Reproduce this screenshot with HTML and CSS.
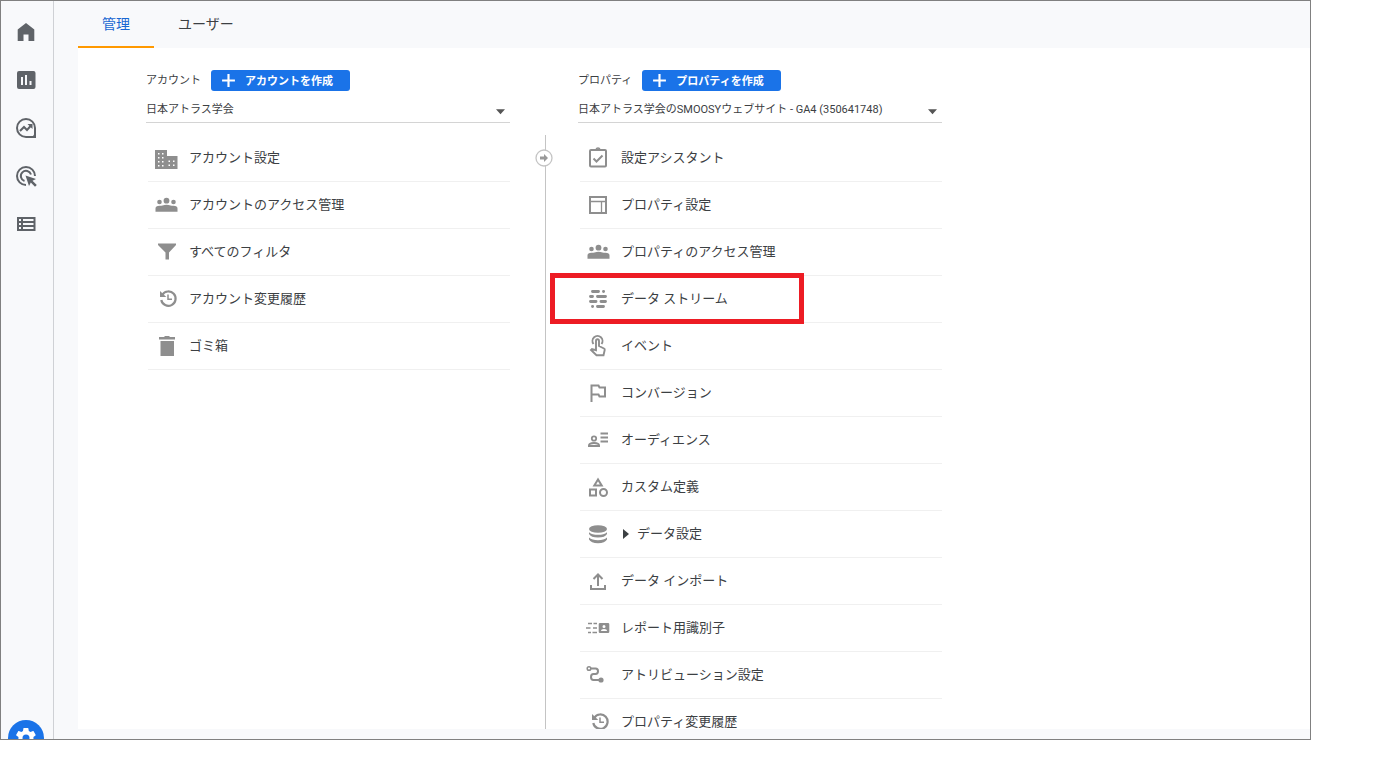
FILE: index.html
```html
<!DOCTYPE html>
<html lang="ja">
<head>
<meta charset="utf-8">
<title>管理</title>
<link rel="stylesheet" href="styles.css">
</head>
<body>
<svg class="defs" aria-hidden="true">
  <symbol id="group" viewBox="0 0 24 24"><circle cx="5.500" cy="9" r="2.300"/><circle cx="12.500" cy="7.700" r="2.900"/><circle cx="19.500" cy="9" r="2.300"/><path d="M1.500 18.700V15.500Q1.500 12.800 5.500 12.800Q7.500 12.800 8.500 12.500Q12.500 11 16.500 12.500Q17.500 12.800 19.500 12.800Q23.500 12.800 23.500 15.500V18.700Z"/></symbol>
  <symbol id="history" viewBox="0 0 24 24"><path fill="none" stroke="currentColor" stroke-width="2.200" d="M8.300 7.800A7.200 7.200 0 1 1 7.300 13"/><path d="M6 4V10H12.300Z"/><path fill="none" stroke="currentColor" stroke-width="1.500" d="M14 7.500V12.300H18"/></symbol>
</svg>
<div class="app">
  <nav class="sidebar" aria-label="メイン">
    <a href="#" class="nav-link" aria-label="ホーム"><svg viewBox="0 0 24 24"><path d="M12 3L3.700 9.500V21H9.500V14.500H14.500V21H20.300V9.500Z"/></svg></a>
    <a href="#" class="nav-link" aria-label="レポート"><svg viewBox="0 0 24 24"><path fill-rule="evenodd" d="M5 3H19.500Q21.500 3 21.500 5V19Q21.500 21 19.500 21H5Q3 21 3 19V5Q3 3 5 3ZM7 9V17H9V9ZM11 7V17H13V7ZM15.500 13V17H17.500V13Z"/></svg></a>
    <a href="#" class="nav-link" aria-label="探索"><svg viewBox="0 0 24 24"><path fill="none" stroke="currentColor" stroke-width="2" d="M21 12V21H12A9 9 0 1 1 21 12Z"/><path fill="none" stroke="currentColor" stroke-width="2" d="M6 15L10 11L13 14L17.300 9.300"/><path d="M13.500 8H18.500V13ZM21.500 16V22H16Q20 20 21.500 16Z"/></svg></a>
    <a href="#" class="nav-link" aria-label="広告"><svg viewBox="0 0 24 24"><path fill="none" stroke="currentColor" stroke-width="2" d="M12 21A9 9 0 1 1 21 12M10.500 17A5.200 5.200 0 1 1 17 10.500"/><path d="M11.500 11.500L22 15L18.500 16.800L22.800 21L21 22.800L16.800 18.500L15 22Z"/></svg></a>
    <a href="#" class="nav-link" aria-label="ライブラリ"><svg viewBox="0 0 24 24"><path fill-rule="evenodd" d="M3 5H21.500V19H3ZM5 7V9H7V7ZM9 7V9H19.500V7ZM5 11V13H7V11ZM9 11V13H19.500V11ZM5 15V17H7V15ZM9 15V17H19.500V15Z"/></svg></a>
    <div class="sidebar-foot">
      <a href="#" class="settings" aria-label="管理"><svg viewBox="0 0 24 24"><path d="M19.400 13c0-.3.100-.6.100-1s0-.7-.1-1l2.100-1.600c.2-.2.200-.4.100-.6l-2-3.500c-.1-.2-.4-.3-.6-.2l-2.500 1c-.5-.4-1.100-.7-1.700-1l-.4-2.600c0-.3-.2-.5-.5-.5h-4c-.2 0-.5.200-.5.400l-.4 2.700c-.6.200-1.100.6-1.700 1l-2.500-1c-.2-.1-.5 0-.6.200l-2 3.500c-.1.200-.1.500.1.600L4.500 11c0 .3-.1.600-.1 1s0 .7.100 1l-2.100 1.600c-.2.200-.2.400-.1.600l2 3.500c.1.200.4.300.6.200l2.500-1c.5.400 1.100.7 1.700 1l.4 2.600c0 .3.200.5.500.5h4c.3 0 .5-.2.500-.4l.4-2.600c.6-.3 1.200-.6 1.700-1l2.500 1c.2.100.5 0 .6-.2l2-3.500c.1-.2.100-.5-.1-.6ZM12 15.500A3.500 3.500 0 1 1 12 8.500A3.500 3.500 0 0 1 12 15.500Z"/></svg></a>
    </div>
  </nav>
  <main class="main">
    <nav class="tabs" aria-label="管理タブ">
      <a href="#" class="tab tab-active" aria-current="page">管理</a>
      <a href="#" class="tab">ユーザー</a>
    </nav>
    <div class="panel">
      <section class="column">
        <div class="head">
          <label for="account">アカウント</label>
          <button type="button" class="create"><svg viewBox="0 0 14 14"><path d="M6 1H8V6H13V8H8V13H6V8H1V6H6Z"/></svg>アカウントを作成</button>
        </div>
        <div class="picker">
          <select id="account"><option>日本アトラス学会</option></select>
          <svg class="caret" viewBox="0 0 10 6"><path d="M0 0H10L5 5.500Z"/></svg>
        </div>
        <ul class="list">
          <li class="item"><a href="#" class="row"><svg class="icon" viewBox="0 0 24 24"><path fill-rule="evenodd" d="M1 4H13V10H23.500V23H1ZM4 7V8.500H5.500V7ZM8 7V8.500H9.500V7ZM4 11V12.500H5.500V11ZM8 11V12.500H9.500V11ZM4 15V16.500H5.500V15ZM8 15V16.500H9.500V15ZM4 19V20.500H5.500V19ZM8 19V20.500H9.500V19ZM14.500 14.500V16H16V14.500ZM19 14.500V16H20.500V14.500ZM14.500 18.500V20H16V18.500ZM19 18.500V20H20.500V18.500Z"/></svg>アカウント設定</a></li>
          <li class="item"><a href="#" class="row"><svg class="icon"><use href="#group"/></svg>アカウントのアクセス管理</a></li>
          <li class="item"><a href="#" class="row"><svg class="icon" viewBox="0 0 24 24"><path d="M4 3.500H22V5L15 12.500V19.500H11.500V12.500L4 5Z"/></svg>すべてのフィルタ</a></li>
          <li class="item"><a href="#" class="row"><svg class="icon"><use href="#history"/></svg>アカウント変更履歴</a></li>
          <li class="item"><a href="#" class="row"><svg class="icon" viewBox="0 0 24 24"><path d="M5 3H10L11 2H15L16 3H21V5.500H5ZM6.500 7H20V22H6.500Z"/></svg>ゴミ箱</a></li>
        </ul>
      </section>
      <div class="divider"><svg viewBox="0 0 18 18"><circle cx="9" cy="9" r="8" fill="#fff" stroke="#c4c4c4" stroke-width="1.300"/><path d="M5 7.500H9V5L13 9L9 13V10.500H5Z"/></svg></div>
      <section class="column">
        <div class="head">
          <label for="property">プロパティ</label>
          <button type="button" class="create"><svg viewBox="0 0 14 14"><path d="M6 1H8V6H13V8H8V13H6V8H1V6H6Z"/></svg>プロパティを作成</button>
        </div>
        <div class="picker">
          <select id="property"><option>日本アトラス学会のSMOOSYウェブサイト - GA4 (350641748)</option></select>
          <svg class="caret" viewBox="0 0 10 6"><path d="M0 0H10L5 5.500Z"/></svg>
        </div>
        <ul class="list">
          <li class="item"><a href="#" class="row"><svg class="icon" viewBox="0 0 24 24"><rect x="4" y="4" width="16" height="16.500" rx="1" fill="none" stroke="currentColor" stroke-width="2"/><path fill="none" stroke="currentColor" stroke-width="2" d="M7.500 12.500L10.500 15.500L16.500 9.500"/><path fill-rule="evenodd" d="M8 3.500H9.200Q10 1.300 12 1.300T14.800 3.500H16V5H8ZM12 2.800A.8.8 0 1 0 12 4.400A.8.8 0 1 0 12 2.800Z"/></svg>設定アシスタント</a></li>
          <li class="item"><a href="#" class="row"><svg class="icon" viewBox="0 0 24 24"><path fill="none" stroke="currentColor" stroke-width="2" d="M4 4H20V20H4Z"/><path fill="none" stroke="currentColor" stroke-width="1.300" d="M4 8.500H20M15.500 8.500V20"/></svg>プロパティ設定</a></li>
          <li class="item"><a href="#" class="row"><svg class="icon"><use href="#group"/></svg>プロパティのアクセス管理</a></li>
          <li class="item marked"><a href="#" class="row"><svg class="icon" viewBox="0 0 24 24"><path fill="none" stroke="currentColor" stroke-width="2.900" stroke-linecap="round" d="M6.500 4.500H12.500M17.500 4.500H17.600M4.500 9.500H6.500M11.500 9.500H19.500M4.500 14.500H10M15 14.500H19.500M6.500 19.500H6.600M11.500 19.500H17.500"/></svg>データ ストリーム</a></li>
          <li class="item"><a href="#" class="row"><svg class="icon" viewBox="0 0 24 24"><path fill="none" stroke="currentColor" stroke-width="1.900" d="M7.500 10A5 5 0 1 1 15.500 10M10 14V7Q10 5.300 11.500 5.300T13 7V12L18 14.500Q19 15 18.700 16L17.500 21.200H10.500L5 16L6 15L10 16.200V13"/></svg>イベント</a></li>
          <li class="item"><a href="#" class="row"><svg class="icon" viewBox="0 0 24 24"><path fill="none" stroke="currentColor" stroke-width="2" d="M5.500 21V4.500H12.500L13.500 6.500H19V15.500H13.500L12.500 13.500H5.500"/></svg>コンバージョン</a></li>
          <li class="item"><a href="#" class="row"><svg class="icon" viewBox="0 0 24 24"><path fill="none" stroke="currentColor" stroke-width="2" d="M14.500 5.500H22M14.500 9.500H22M14.500 13.500H22M3 18V17.500Q3 15 8 15T13 17.500V18Z"/><circle cx="8" cy="10.500" r="2.200" fill="none" stroke="currentColor" stroke-width="1.800"/></svg>オーディエンス</a></li>
          <li class="item"><a href="#" class="row"><svg class="icon" viewBox="0 0 24 24"><path fill="none" stroke="currentColor" stroke-width="2" d="M12 4.500L8.300 10.500H15.700ZM4 14.500H10V20.500H4Z"/><circle cx="17.500" cy="17.500" r="3.500" fill="none" stroke="currentColor" stroke-width="2"/></svg>カスタム定義</a></li>
          <li class="item"><button type="button" class="row" aria-expanded="false"><svg class="icon" viewBox="0 0 24 24"><ellipse cx="12" cy="7" rx="9" ry="3.800"/><path d="M3 10.200Q6 12.800 12 12.800T21 10.200V12Q19 15.500 12 15.500T3 12ZM3 15.500Q6 18.200 12 18.200T21 15.500V17.500Q19 21.200 12 21.200T3 17.500Z"/></svg><svg class="expander" viewBox="0 0 6 10"><path d="M0 0L6 5L0 10Z"/></svg>データ設定</button></li>
          <li class="item"><a href="#" class="row"><svg class="icon" viewBox="0 0 24 24"><path fill="none" stroke="currentColor" stroke-width="2" d="M5 16V20H19V16M12 17V6M7.500 10L12 5.500L16.500 10"/></svg>データ インポート</a></li>
          <li class="item"><a href="#" class="row"><svg class="icon" viewBox="0 0 24 24"><path fill="none" stroke="currentColor" stroke-width="1.700" d="M2 7.500H6M7.500 7.500H11M0 12H4.500M7 12H11M2 16.500H5M6.500 16.500H11"/><path fill-rule="evenodd" d="M14 7H22Q23.300 7 23.300 8.300V15.700Q23.300 17 22 17H14Q12.700 17 12.700 15.700V8.300Q12.700 7 14 7ZM18 9A1.500 1.500 0 1 0 18 12A1.500 1.500 0 1 0 18 9ZM15 15H21Q21 13 18 13T15 15Z"/></svg>レポート用識別子</a></li>
          <li class="item"><a href="#" class="row"><svg class="icon" viewBox="0 0 24 24"><path fill="none" stroke="currentColor" stroke-width="2" d="M5 5.500H9.500Q12 5.500 12 8.200T9.500 11H7.500Q5 11 5 14T7.500 17H14"/><circle cx="3" cy="5.500" r="1.800" fill="#fff" stroke="currentColor" stroke-width="1.500"/><circle cx="15" cy="17" r="2.600"/></svg>アトリビューション設定</a></li>
          <li class="item"><a href="#" class="row"><svg class="icon"><use href="#history"/></svg>プロパティ変更履歴</a></li>
        </ul>
      </section>
    </div>
  </main>
</div>
</body>
</html>
```
FILE: styles.css
```css
*, *::after { box-sizing: border-box; }
body {
  margin: 0;
  height: 100vh;
  padding: 0 84px 26px 0;
  background: #fff;
  color: #3c4043;
  font-family: Roboto, "Noto Sans CJK JP", sans-serif;
  font-size: 13px;
}
a { color: inherit; text-decoration: none; }
svg { display: block; flex: none; fill: currentColor; }
.defs { position: absolute; width: 0; height: 0; }
.app {
  display: flex;
  height: 100%;
  border: 1px solid #808080;
  background: #f8f9fb;
  overflow: hidden;
}
.sidebar {
  display: flex;
  flex-direction: column;
  align-items: center;
  gap: 24px;
  flex: none;
  width: 53px;
  padding: 19px 2px 0 0;
  border-right: 1px solid #cfd1d5;
  color: #5f6368;
}
.nav-link svg { width: 24px; height: 24px; }
.sidebar-foot { height: 19px; margin-top: auto; overflow: hidden; }
.settings {
  display: grid;
  place-items: center;
  width: 36px;
  height: 36px;
  border-radius: 50%;
  background: #1a73e8;
  color: #fff;
}
.settings svg { width: 24px; height: 24px; }
.main {
  display: flex;
  flex-direction: column;
  flex: 1;
  min-width: 0;
  padding: 0 0 10px 24px;
}
.tabs { display: flex; flex: none; height: 47px; font-size: 14px; }
.tab {
  padding: 0 24px;
  border-bottom: 2px solid transparent;
  line-height: 46px;
}
.tab-active { border-color: #f90; color: #1967d2; }
.panel {
  display: grid;
  grid-template-columns: minmax(0, 364px) 68px minmax(0, 364px);
  flex: 1;
  min-height: 0;
  padding: 22px 68px 0;
  background: #fff;
  overflow: hidden;
}
.head { display: flex; align-items: center; gap: 10px; height: 21px; font-size: 11px; }
.head label { padding-bottom: 4px; }
.create {
  display: flex;
  align-items: center;
  gap: 9px;
  height: 21px;
  padding: 0 17px 2px 10px;
  border: 0;
  border-radius: 3px;
  background: #1a73e8;
  color: #fff;
  font: bold 11px Roboto, "Noto Sans CJK JP", sans-serif;
}
.create svg { width: 15px; height: 15px; margin-top: 2px; }
.picker { position: relative; margin: 5px 0 12px; }
.picker select {
  display: block;
  width: 100%;
  height: 27px;
  padding: 0 20px 0 0;
  border: 0;
  border-bottom: 1px solid #d4d4d4;
  border-radius: 0;
  background: none;
  color: inherit;
  font: inherit;
  font-size: 11px;
  appearance: none;
}
.caret {
  position: absolute;
  right: 5px;
  top: 13px;
  width: 9px;
  height: 6px;
  color: #555;
  pointer-events: none;
}
.list { margin: 0 0 0 2px; padding: 0; list-style: none; }
.item { position: relative; height: 47px; border-bottom: 1px solid #f0f0f0; }
.row {
  display: flex;
  align-items: center;
  width: 100%;
  height: 42px;
  padding: 0 0 0 6px;
  border: 0;
  background: none;
  color: inherit;
  font: inherit;
  white-space: nowrap;
}
.icon { width: 24px; height: 24px; margin: 4px 11px 0 0; color: #8e8e8e; }
.expander { width: 6px; height: 10px; margin: 4px 8px 0 2px; }
.marked::after {
  content: "";
  position: absolute;
  left: -30px;
  top: -3px;
  width: 254px;
  height: 51px;
  border: 5px solid #ed1c24;
  pointer-events: none;
}
.divider {
  display: flex;
  justify-content: center;
  margin-top: 65px;
  padding-top: 14px;
  color: #999;
  background: linear-gradient(#c4c4c4, #c4c4c4) 35px 0 / 1px 100% no-repeat;
}
.divider svg { width: 18px; height: 18px; }
```
